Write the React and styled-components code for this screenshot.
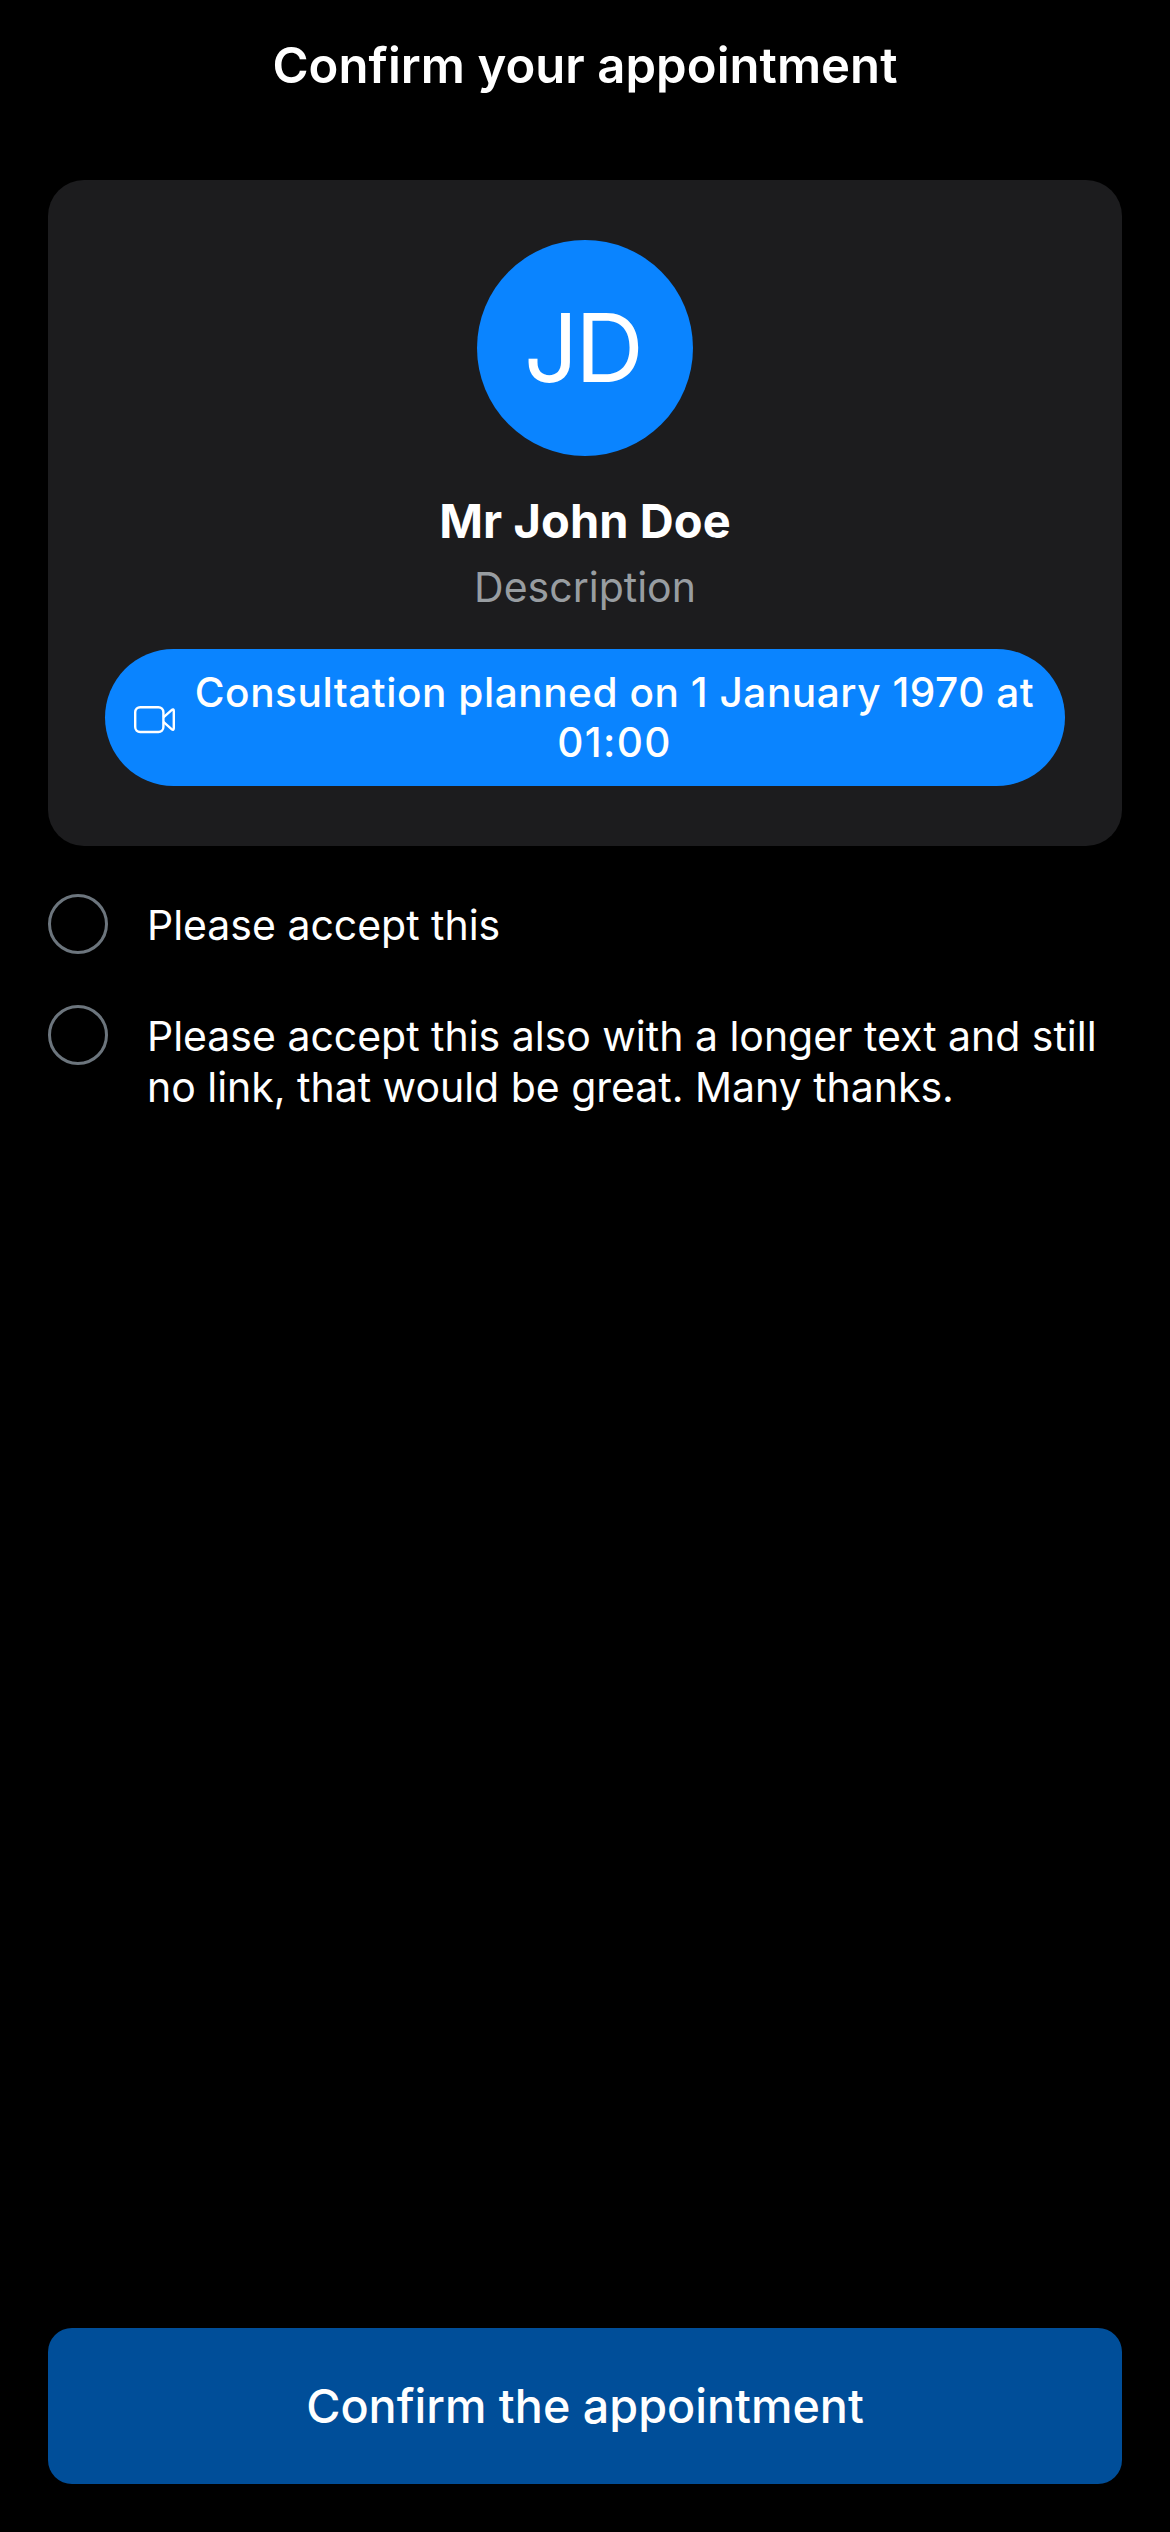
import React, { useState } from 'react';
import styled, { createGlobalStyle } from 'styled-components';

const GlobalStyle = createGlobalStyle`
  *, *::before, *::after {
    box-sizing: border-box;
  }
  body {
    margin: 0;
    background: #000;
    color: #fff;
    font-family: Inter, Roboto, 'Liberation Sans', sans-serif;
  }
`;

const Screen = styled.div`
  display: flex;
  flex-direction: column;
  width: 100%;
  min-height: 100vh;
  padding: 0 48px 48px;
`;

const Header = styled.header`
  height: 180px;
  padding-top: 36px;
  text-align: center;
`;

const Title = styled.h1`
  margin: 0;
  font-size: 49px;
  line-height: 60px;
  font-weight: 600;
  letter-spacing: 0.06px;
`;

const Card = styled.section`
  display: flex;
  flex-direction: column;
  align-items: center;
  padding: 60px 57px;
  border-radius: 36px;
  background: #1c1c1e;
`;

const Avatar = styled.div`
  display: flex;
  align-items: center;
  justify-content: center;
  width: 216px;
  height: 216px;
  padding-right: 5px;
  border-radius: 50%;
  background: #0a84ff;
  font-size: 95px;
  line-height: 114px;
  letter-spacing: -2.9px;
`;

const Name = styled.h2`
  margin: 36px 0 0;
  font-size: 47px;
  line-height: 58px;
  font-weight: 700;
  letter-spacing: 0.07px;
`;

const Description = styled.p`
  margin: 12px 0 0;
  color: #989da1;
  font-size: 41px;
  line-height: 50px;
`;

const Badge = styled.div`
  display: flex;
  align-items: center;
  width: 100%;
  height: 137px;
  margin-top: 37px;
  padding: 0 26px 0 29px;
  border-radius: 69px;
  background: #0a84ff;
`;

const VideoIcon = styled.svg`
  flex: none;
  width: 42px;
  height: 28px;
  margin: 4px 14px 0 0;
  fill: none;
  stroke: #fff;
  stroke-width: 2.4;
  stroke-linejoin: round;
`;

const BadgeText = styled.span`
  flex: 1;
  text-align: center;
  font-size: 40.6px;
  line-height: 50px;
  font-weight: 500;
  letter-spacing: 0.53px;
`;

const Time = styled.span`
  letter-spacing: 1.37px;
`;

const Consents = styled.ul`
  display: flex;
  flex-direction: column;
  gap: 51px;
  margin: 48px 0 0;
  padding: 0;
  list-style: none;
`;

const Consent = styled.li`
  display: flex;
  align-items: flex-start;
  gap: 39px;
  min-height: 60px;
`;

const Check = styled.button`
  flex: none;
  width: 60px;
  height: 60px;
  padding: 0;
  border: 3px solid #6c757d;
  border-radius: 50%;
  background: ${(p) => (p.$checked ? '#0a84ff' : 'transparent')};
`;

const ConsentText = styled.span`
  flex: 1;
  padding-top: 6px;
  font-size: 41px;
  line-height: 51px;
  letter-spacing: -0.02px;
`;

const ConfirmButton = styled.button`
  height: 156px;
  margin-top: auto;
  padding: 0;
  border: 0;
  border-radius: 24px;
  background: #004e99;
  color: #fff;
  font-family: inherit;
  font-size: 46.7px;
  line-height: 58px;
  font-weight: 500;
`;

const CONSENTS = [
  { id: 'short', text: 'Please accept this' },
  {
    id: 'long',
    text: 'Please accept this also with a longer text and still no link, that would be great. Many thanks.',
  },
];

export default function App() {
  const [accepted, setAccepted] = useState({});
  const toggle = (id) => setAccepted((prev) => ({ ...prev, [id]: !prev[id] }));

  return (
    <>
      <GlobalStyle />
      <Screen>
        <Header>
          <Title>Confirm your appointment</Title>
        </Header>
        <Card>
          <Avatar>JD</Avatar>
          <Name>Mr John Doe</Name>
          <Description>Description</Description>
          <Badge>
            <VideoIcon viewBox="0 0 42 28">
              <rect x="1.2" y="1.2" width="28.2" height="24.8" rx="5" />
              <path d="M29.4 11.4L37.3 4.4Q39.8 2.3 39.8 5V22.2Q39.8 25 37.3 22.8L29.4 15.8" />
            </VideoIcon>
            <BadgeText>
              Consultation planned on 1 January 1970 at <Time>01:00</Time>
            </BadgeText>
          </Badge>
        </Card>
        <Consents>
          {CONSENTS.map(({ id, text }) => (
            <Consent key={id}>
              <Check
                type="button"
                role="checkbox"
                aria-checked={!!accepted[id]}
                $checked={!!accepted[id]}
                onClick={() => toggle(id)}
              />
              <ConsentText>{text}</ConsentText>
            </Consent>
          ))}
        </Consents>
        <ConfirmButton type="button">Confirm the appointment</ConfirmButton>
      </Screen>
    </>
  );
}
